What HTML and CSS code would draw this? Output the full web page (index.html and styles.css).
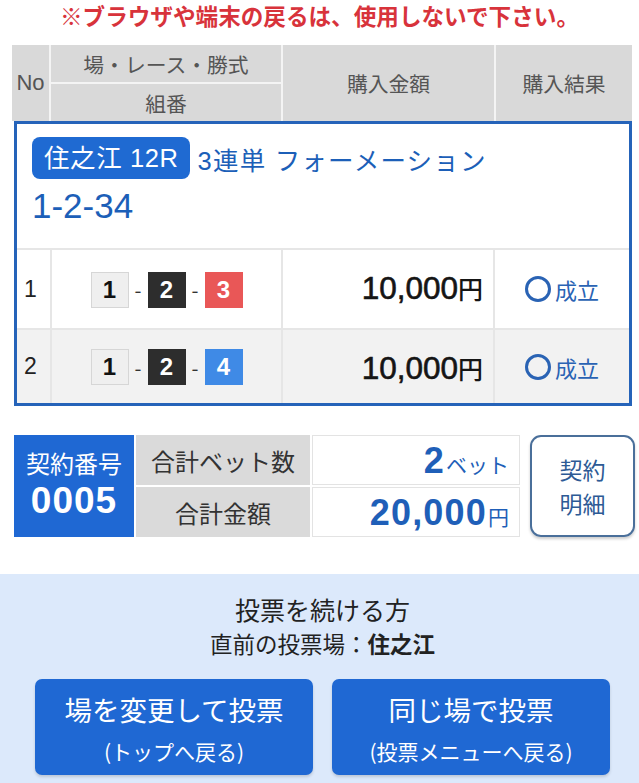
FILE: index.html
```html
<!DOCTYPE html>
<html lang="ja">
<head>
<meta charset="utf-8">
<link rel="stylesheet" href="styles.css">
</head>
<body>
<div class="page">
  <p class="warning">※ブラウザや端末の戻るは、使用しないで下さい。</p>

  <div class="thead">
    <div class="th th-no">No</div>
    <div class="th th-race">場・レース・勝式</div>
    <div class="th th-amount">購入金額</div>
    <div class="th th-result">購入結果</div>
    <div class="th th-combo">組番</div>
  </div>

  <div class="bet">
    <div class="race-info">
      <div class="race-line">
        <span class="badge">住之江 12R</span>
        <span class="kind">3連単 フォーメーション</span>
      </div>
      <div class="combo-text">1-2-34</div>
    </div>
    <div class="row">
      <div class="cell c-no">1</div>
      <div class="cell c-combo">
        <span class="num n1">1</span><span class="dash">-</span><span class="num n2">2</span><span class="dash">-</span><span class="num n3">3</span>
      </div>
      <div class="cell c-amount"><span class="amt">10,000</span><span class="yen">円</span></div>
      <div class="cell c-result"><span class="circle"></span>成立</div>
    </div>
    <div class="row alt">
      <div class="cell c-no">2</div>
      <div class="cell c-combo">
        <span class="num n1">1</span><span class="dash">-</span><span class="num n2">2</span><span class="dash">-</span><span class="num n4">4</span>
      </div>
      <div class="cell c-amount"><span class="amt">10,000</span><span class="yen">円</span></div>
      <div class="cell c-result"><span class="circle"></span>成立</div>
    </div>
  </div>

  <div class="summary">
    <div class="contract">
      <div class="contract-label">契約番号</div>
      <div class="contract-no">0005</div>
    </div>
    <div class="totals">
      <div class="t-label">合計ベット数</div>
      <div class="t-value"><span class="big">2</span><span class="unit">ベット</span></div>
      <div class="t-label">合計金額</div>
      <div class="t-value"><span class="big">20,000</span><span class="unit">円</span></div>
    </div>
    <div class="detail-btn"><span class="dl">契約</span><span class="dl">明細</span></div>
  </div>

  <div class="continue">
    <div class="cont-title">投票を続ける方</div>
    <div class="cont-sub">直前の投票場：<b>住之江</b></div>
    <div class="btns">
      <div class="btn"><span class="btn-main">場を変更して投票</span><span class="btn-sub">(トップへ戻る)</span></div>
      <div class="btn"><span class="btn-main">同じ場で投票</span><span class="btn-sub">(投票メニューへ戻る)</span></div>
    </div>
  </div>
</div>
</body>
</html>
```

FILE: styles.css
```css
* { box-sizing: border-box; }
html, body { margin: 0; padding: 0; background: #fff; }
body {
  font-family: "Noto Sans CJK JP", "Noto Sans", sans-serif;
  color: #222;
  width: 639px;
  overflow: hidden;
}
.page { width: 639px; }

.warning {
  margin: 0;
  height: 45px;
  padding-top: 1px;
  text-align: center;
  color: #d8333b;
  font-weight: 700;
  font-size: 22.6px;
  line-height: 30px;
}

.thead {
  margin-left: 12px;
  width: 620px;
  display: grid;
  grid-template-columns: 37px 230px 211px 136px;
  grid-template-rows: 37px 37px;
  gap: 2px;
  background: #f4f4f4;
  height: 76px;
}
.th {
  background: #d9d9d9;
  color: #555;
  font-size: 20.8px;
  display: flex;
  align-items: center;
  justify-content: center;
}
.th-no { grid-row: 1 / 3; grid-column: 1; font-size: 22px; font-family: "Liberation Sans", sans-serif; }
.th-race { grid-row: 1; grid-column: 2; }
.th-combo { grid-row: 2; grid-column: 2; }
.th-amount { grid-row: 1 / 3; grid-column: 3; }
.th-result { grid-row: 1 / 3; grid-column: 4; }

.bet {
  margin-left: 14px;
  width: 618px;
  border: 3px solid #2563b9;
  background: #fff;
}
.race-info {
  height: 126px;
  padding: 13px 0 0 15px;
  border-bottom: 2px solid #e6e6e6;
}
.race-line { display: flex; align-items: center; height: 42px; }
.badge {
  background: #1f6ad2;
  color: #fff;
  font-family: "Liberation Sans", "Noto Sans CJK JP", sans-serif;
  font-size: 25.5px;
  letter-spacing: 0.6px;
  height: 42px;
  line-height: 42px;
  padding: 0 11px 0 12px;
  border-radius: 8px;
  margin-right: 8px;
}
.kind {
  color: #1c5fb8;
  font-family: "Liberation Sans", "Noto Sans CJK JP", sans-serif;
  font-size: 25.5px;
  letter-spacing: 1.2px;
}
.combo-text {
  color: #1c5fb8;
  font-family: "Liberation Sans", sans-serif;
  font-size: 35px;
  margin-top: 8px;
  line-height: 38px;
}

.row {
  display: grid;
  grid-template-columns: 33px 231px 212px 1fr;
  height: 78px;
  background: #fff;
}
.row.alt { background: #f2f2f2; height: 75px; border-top: 2px solid #e6e6e6; }
.cell { display: flex; align-items: center; }
.cell + .cell { border-left: 2px solid #e6e6e6; }
.c-no { padding-left: 7px; font-size: 23px; color: #222; font-family: "Liberation Sans", sans-serif; }
.c-combo { justify-content: center; padding-top: 1px; }
.num {
  width: 38px;
  height: 36px;
  display: inline-flex;
  align-items: center;
  justify-content: center;
  font-size: 24px;
  font-weight: 700;
  font-family: "Liberation Sans", "Noto Sans", sans-serif;
}
.n1 { background: #efefef; border: 1px solid #d6d6d6; color: #111; }
.n2 { background: #2d2d2d; color: #fff; }
.n3 { background: #e95757; color: #fff; }
.n4 { background: #3f8ae6; color: #fff; }
.dash { width: 19px; text-align: center; font-size: 20px; color: #333; }
.c-amount {
  justify-content: flex-end;
  align-items: baseline;
  padding-right: 10px;
  padding-top: 20px;
  color: #151515;
}
.amt {
  font-family: "Liberation Sans", sans-serif;
  font-size: 31.5px;
  -webkit-text-stroke: 0.6px #151515;
}
.yen { font-size: 25px; font-weight: 500; }
.c-result {
  padding-left: 30px;
  color: #2a63b4;
  font-size: 22px;
}
.circle {
  width: 26px;
  height: 26px;
  border: 3px solid #2a63b4;
  border-radius: 50%;
  margin-right: 4px;
  display: inline-block;
}

.summary {
  margin-top: 29px;
  margin-left: 14px;
  display: flex;
  height: 102px;
}
.contract {
  width: 120px;
  background: #1f68d3;
  color: #fff;
  display: flex;
  flex-direction: column;
  align-items: center;
  padding-top: 12px;
}
.contract-label { font-size: 24px; line-height: 32px; }
.contract-no {
  font-size: 37px;
  font-weight: 700;
  letter-spacing: 1px;
  line-height: 44px;
  font-family: "Liberation Sans", "Noto Sans", sans-serif;
}
.totals {
  margin-left: 2px;
  display: grid;
  grid-template-columns: 174px 208px;
  grid-template-rows: 50px 50px;
  row-gap: 2px;
  column-gap: 2px;
}
.t-label {
  background: #dadada;
  font-size: 24px;
  color: #333;
  display: flex;
  align-items: center;
  justify-content: center;
}
.t-value {
  border: 1px solid #e3e3e3;
  display: flex;
  align-items: baseline;
  justify-content: flex-end;
  padding-right: 10px;
  color: #1f5fb8;
  padding-top: 4px;
}
.big {
  font-size: 36px;
  font-weight: 700;
  letter-spacing: 1.2px;
  font-family: "Liberation Sans", "Noto Sans", sans-serif;
}
.unit { font-size: 21px; margin-left: 1px; }
.detail-btn {
  margin-left: 10px;
  width: 105px;
  border: 2px solid #4a6f9a;
  border-radius: 11px;
  box-shadow: 0 2px 3px rgba(0,0,0,0.2);
  color: #2d5a95;
  font-size: 23px;
  display: flex;
  flex-direction: column;
  align-items: center;
  justify-content: center;
  text-align: center;
}
.dl { display: block; height: 34px; line-height: 34px; }

.continue {
  margin-top: 37px;
  background: #dce9fb;
  height: 210px;
  padding-top: 17px;
  padding-left: 6px;
  text-align: center;
}
.cont-title { font-size: 25px; color: #222; line-height: 36px; }
.cont-sub { font-size: 22.5px; color: #222; line-height: 32px; }
.cont-sub b { font-weight: 700; }
.btns {
  margin-top: 20px;
  display: flex;
  justify-content: center;
  gap: 19px;
}
.btn {
  width: 278px;
  height: 96px;
  background: #1f68d3;
  border-radius: 7px;
  box-shadow: 0 2px 3px rgba(0,0,0,0.15);
  color: #fff;
  display: flex;
  flex-direction: column;
  align-items: center;
  padding-top: 10px;
}
.btn-main { font-size: 27.5px; line-height: 40px; }
.btn-sub { font-size: 21px; line-height: 34px; margin-top: 5px; }
```
